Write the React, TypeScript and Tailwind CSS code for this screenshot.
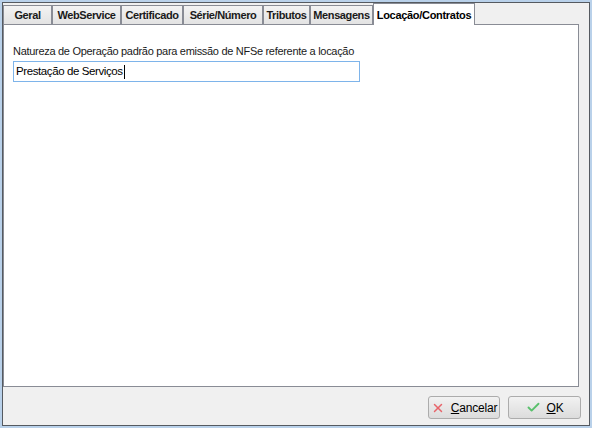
import { X, Check } from 'lucide-react';

const TABS = [
  { label: 'Geral', w: 'w-[49px]' },
  { label: 'WebService', w: 'w-[69px]' },
  { label: 'Certificado', w: 'w-[62px]' },
  { label: 'Série/Número', w: 'w-[80px]' },
  { label: 'Tributos', w: 'w-[47px]' },
  { label: 'Mensagens', w: 'w-[63px]' },
];

const font = { fontFamily: "'Liberation Sans', Arial, sans-serif" };

function DialogButton({ children, icon, width }: { children: React.ReactNode; icon: React.ReactNode; width: string }) {
  return (
    <button
      className={`${width} h-[23px] flex items-center justify-center gap-[6px] rounded-[3px] border border-[#acacac] bg-gradient-to-b from-[#f2f2f2] to-[#dcdcdc] text-[12px] tracking-[-0.2px] text-black`}
    >
      {icon}
      <span>{children}</span>
    </button>
  );
}

export default function App() {
  return (
    <div className="w-[592px] h-[428px] bg-[#b9d1ea] p-[2px] select-none" style={font}>
      <div className="h-full flex flex-col border border-[#555a60] bg-[#f0f0f0]">
        {/* Tab strip */}
        <div className="h-[21px] flex items-end relative z-10">
          {TABS.map((t) => (
            <div
              key={t.label}
              className={`${t.w} shrink-0 h-[19px] flex items-center justify-center border border-b-0 border-[#898c95] bg-gradient-to-b from-[#f3f3f3] to-[#e3e3e3] text-[11px] tracking-[-0.4px] font-bold text-[#1a1a1a]`}
            >
              {t.label}
            </div>
          ))}
          <div className="w-[102px] shrink-0 h-[22px] -mb-px flex items-start pt-[3px] justify-center border border-b-0 border-[#898c95] bg-white text-[11px] tracking-[-0.3px] font-bold text-black">
            Locação/Contratos
          </div>
        </div>

        {/* Page content */}
        <div className="flex-1 mr-[10px] border border-[#898c95] bg-white px-[9px] pt-[20px]">
          <div className="text-[11px] leading-[13px] tracking-[-0.3px] text-[#1a1a1a]">
            Natureza de Operação padrão para emissão de NFSe referente a locação
          </div>
          <div className="mt-[3px] w-[347px] h-[21px] border border-[#7eb4ea] bg-white flex items-center px-[2px] text-[11.5px] tracking-[-0.4px] text-black">
            Prestação de Serviços
            <span className="ml-px inline-block w-px h-[14px] bg-black" />
          </div>
        </div>

        {/* Footer buttons */}
        <div className="h-[38px] flex justify-end items-start pt-[9px] pr-[8px] gap-[8px]">
          <DialogButton width="w-[72px]" icon={<X size={14} strokeWidth={2.5} className="text-[#e8646a]" />}>
            <span className="underline">C</span>ancelar
          </DialogButton>
          <DialogButton width="w-[73px]" icon={<Check size={15} strokeWidth={3} className="text-[#59c06c]" />}>
            <span className="underline">O</span>K
          </DialogButton>
        </div>
      </div>
    </div>
  );
}
